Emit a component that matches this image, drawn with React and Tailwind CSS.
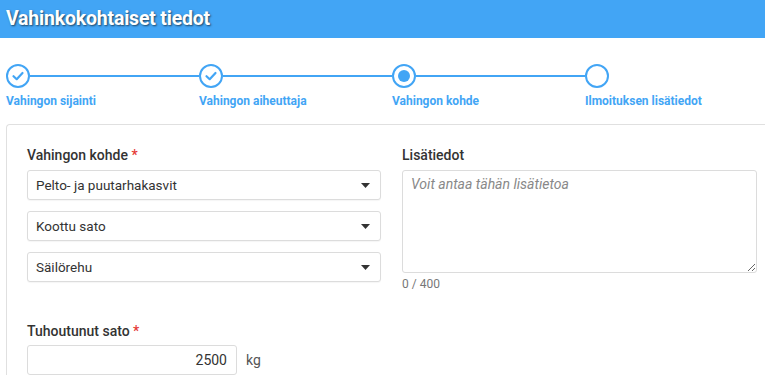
import React from 'react';

const font = { fontFamily: 'Roboto, "Noto Sans", sans-serif' };

const steps = [
  { label: 'Vahingon sijainti', state: 'done' },
  { label: 'Vahingon aiheuttaja', state: 'done' },
  { label: 'Vahingon kohde', state: 'active' },
  { label: 'Ilmoituksen lisätiedot', state: 'todo' },
];

const StepCircle = ({ state }) => (
  <div className="w-[24px] h-[24px] rounded-full border-2 border-[#42a5f5] bg-white flex items-center justify-center shrink-0">
    {state === 'done' && (
      <svg width="14" height="14" viewBox="0 0 14 14" fill="none">
        <path d="M2.5 7.2 L5.7 10.2 L11.5 4" stroke="#42a5f5" strokeWidth="2.2" strokeLinecap="round" strokeLinejoin="round" />
      </svg>
    )}
    {state === 'active' && <div className="w-[12px] h-[12px] rounded-full bg-[#42a5f5]" />}
  </div>
);

const Caret = () => (
  <svg width="9" height="5" viewBox="0 0 9 5">
    <path d="M0 0 L9 0 L4.5 5 Z" fill="#333" />
  </svg>
);

const Select = ({ value, first }) => (
  <div className={`${first ? '' : 'mt-[11px]'} h-[30px] border border-[#dcdcdc] rounded-[3px] bg-white flex items-center justify-between pl-[8px] pr-[10px] shadow-[0_1px_1px_rgba(0,0,0,0.04)]`}>
    <span className="text-[13.5px] text-[#333]">{value}</span>
    <Caret />
  </div>
);

const Required = () => <span className="text-[#e53935]"> *</span>;

const App = () => {
  return (
    <div className="w-[765px] h-[382px] bg-white overflow-hidden" style={font}>
      {/* Header */}
      <div className="h-[38px] bg-[#42a5f5] flex items-center pl-[6px]">
        <h1 className="text-white text-[19.5px] font-bold tracking-[-0.2px] [text-shadow:1px_1px_2px_rgba(0,0,0,0.6)]">
          Vahinkokohtaiset tiedot
        </h1>
      </div>

      {/* Stepper */}
      <div className="flex pl-[6px] pt-[26px]">
        {steps.map((step, i) => (
          <div key={i} className={i < 3 ? 'w-[193px] flex flex-col' : 'flex flex-col'}>
            <div className="flex items-center">
              <StepCircle state={step.state} />
              {i < 3 && <div className="flex-1 h-[2px] bg-[#42a5f5]" />}
            </div>
            <span className="mt-[4px] text-[12px] font-bold text-[#42a5f5] whitespace-nowrap">{step.label}</span>
          </div>
        ))}
      </div>

      {/* Panel */}
      <div className="ml-[6px] mt-[14px] border-l border-t border-[#e0e0e0] rounded-tl-[4px] pl-[20px] pt-[22px]">
        <div className="grid grid-cols-[354px_355px] gap-x-[21px]">
          <div>
            <label className="block text-[14px] font-medium text-[#333] leading-[17px]">
              Vahingon kohde<Required />
            </label>
            <div className="mt-[6px]">
              <Select value="Pelto- ja puutarhakasvit" first />
              <Select value="Koottu sato" />
              <Select value="Säilörehu" />
            </div>
          </div>
          <div>
            <label className="block text-[14px] font-medium text-[#333] leading-[17px]">Lisätiedot</label>
            <textarea
              readOnly
              placeholder="Voit antaa tähän lisätietoa"
              className="mt-[6px] block w-full h-[103px] border border-[#dcdcdc] rounded-[3px] px-[8px] py-[3px] text-[14px] italic placeholder:text-[#888] resize"
              style={font}
            />
            <div className="mt-[2px] text-[12px] text-[#777]">0 / 400</div>
          </div>
        </div>

        <div className="mt-[30px]">
          <label className="block text-[14px] font-medium text-[#333] leading-[17px]">
            Tuhoutunut sato<Required />
          </label>
          <div className="mt-[5px] flex items-center">
            <div className="w-[210px] h-[30px] border border-[#dcdcdc] rounded-[3px] flex items-center justify-end pr-[9px]">
              <span className="text-[14px] text-[#333]">2500</span>
            </div>
            <span className="ml-[9px] text-[14px] text-[#555]">kg</span>
          </div>
        </div>
      </div>
    </div>
  );
};

export default App;
